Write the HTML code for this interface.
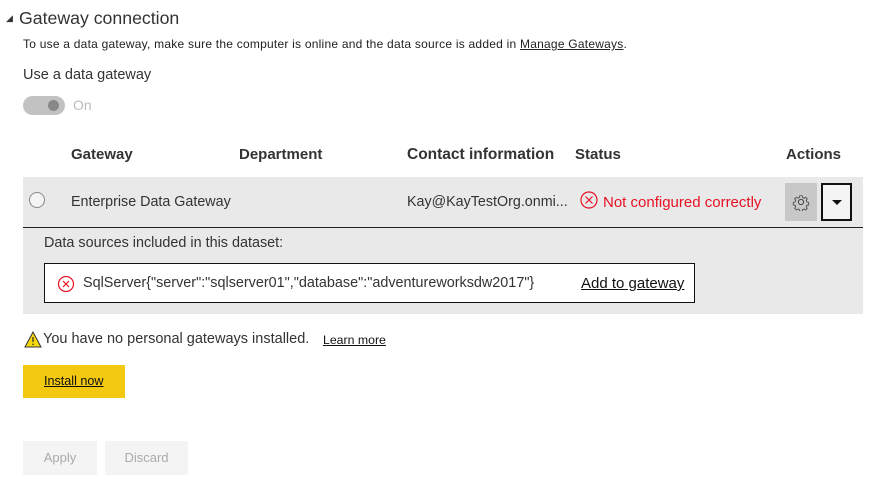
<!DOCTYPE html>
<html><head><style>
*{margin:0;padding:0;box-sizing:border-box}
body{width:894px;height:489px;background:#fff;font-family:"Segoe UI","Liberation Sans",sans-serif;color:#333;position:relative;overflow:hidden}
.a{position:absolute;white-space:nowrap}
u{text-decoration:underline}
</style></head><body>
<div class="a" style="left:6px;top:13px;font-size:9px;color:#333">&#9698;</div>
<div class="a" style="left:19px;top:8px;font-size:17.7px;color:#333">Gateway connection</div>
<div class="a" style="left:23px;top:37px;font-size:12px;letter-spacing:0.23px;color:#222">To use a data gateway, make sure the computer is online and the data source is added in <u>Manage Gateways</u>.</div>
<div class="a" style="left:23px;top:67px;font-size:14.5px;color:#333">Use a data gateway</div>
<div class="a" style="left:23px;top:96px;width:42px;height:19px;border-radius:10px;background:#c2c2c2"></div>
<div class="a" style="left:48px;top:100px;width:11px;height:11px;border-radius:50%;background:#888"></div>
<div class="a" style="left:73px;top:97px;font-size:14px;color:#bbb">On</div>

<div class="a" style="left:71px;top:146px;font-size:15px;font-weight:bold;color:#333">Gateway</div>
<div class="a" style="left:239px;top:146px;font-size:15px;font-weight:bold;color:#333">Department</div>
<div class="a" style="left:407px;top:146px;font-size:15.5px;font-weight:bold;color:#333">Contact information</div>
<div class="a" style="left:575px;top:146px;font-size:15px;font-weight:bold;color:#333">Status</div>
<div class="a" style="left:786px;top:146px;font-size:15px;font-weight:bold;color:#333">Actions</div>

<div class="a" style="left:23px;top:177px;width:840px;height:51px;background:#e9e9e9;border-bottom:1px solid #222"></div>
<div class="a" style="left:29px;top:192px;width:16px;height:16px;border-radius:50%;border:1px solid #888;background:#f4f4f4"></div>
<div class="a" style="left:71px;top:194px;font-size:14.3px;color:#333">Enterprise Data Gateway</div>
<div class="a" style="left:407px;top:194px;font-size:14.3px;color:#333">Kay@KayTestOrg.onmi...</div>
<svg class="a" style="left:580px;top:191px" width="18" height="18" viewBox="0 0 18 18"><circle cx="9" cy="9" r="8" fill="none" stroke="#e81123" stroke-width="1.2"/><path d="M5.5 5.5L12.5 12.5M12.5 5.5L5.5 12.5" stroke="#e81123" stroke-width="1.2"/></svg>
<div class="a" style="left:603px;top:194px;font-size:15px;color:#e81123">Not configured correctly</div>
<div class="a" style="left:785px;top:183px;width:32px;height:38px;background:#c8c8c8"></div>
<svg class="a" style="left:792px;top:193px" width="18" height="18" viewBox="0 0 18 18"><path d="M7.5 1.5h3l.5 2.2 1.6.8 2-1.2 2 2-1.2 2 .7 1.6 2.2.6v3l-2.2.5-.7 1.6 1.2 2-2 2-2-1.2-1.6.7-.5 2.2h-3l-.5-2.2-1.6-.7-2 1.2-2-2 1.2-2-.7-1.6-2.2-.5v-3l2.2-.6.7-1.6-1.2-2 2-2 2 1.2 1.6-.8z" fill="none" stroke="#444" stroke-width="1" transform="translate(1.5 1.5) scale(.83)"/><circle cx="9" cy="9" r="2.6" fill="none" stroke="#444"/></svg>
<div class="a" style="left:821px;top:183px;width:31px;height:38px;background:#f4f4f4;border:2px solid #111"></div>
<div class="a" style="left:832px;top:200px;width:0;height:0;border-left:5px solid transparent;border-right:5px solid transparent;border-top:5px solid #111"></div>

<div class="a" style="left:23px;top:228px;width:840px;height:86px;background:#e9e9e9"></div>
<div class="a" style="left:44px;top:235px;font-size:14.4px;color:#333">Data sources included in this dataset:</div>
<div class="a" style="left:44px;top:263px;width:651px;height:40px;background:#fff;border:1px solid #111"></div>
<svg class="a" style="left:57px;top:275px" width="18" height="18" viewBox="0 0 18 18"><circle cx="9" cy="9" r="7.5" fill="none" stroke="#e81123" stroke-width="1.2"/><path d="M6 6L12 12M12 6L6 12" stroke="#e81123" stroke-width="1.2"/></svg>
<div class="a" style="left:83px;top:275px;font-size:14.4px;color:#333">SqlServer{"server":"sqlserver01","database":"adventureworksdw2017"}</div>
<div class="a" style="left:581px;top:275px;font-size:15px;color:#111"><u>Add to gateway</u></div>

<svg class="a" style="left:24px;top:331px" width="18" height="17" viewBox="0 0 18 17"><path d="M9 1L17 16H1z" fill="#f6d90f" stroke="#333" stroke-width="1"/><path d="M9 6v5" stroke="#333" stroke-width="1.3"/><circle cx="9" cy="13.3" r=".8" fill="#333"/></svg>
<div class="a" style="left:43px;top:331px;font-size:14.5px;color:#333">You have no personal gateways installed.</div>
<div class="a" style="left:323px;top:333px;font-size:12.3px;color:#111"><u>Learn more</u></div>
<div class="a" style="left:23px;top:365px;width:102px;height:33px;background:#f2c811"></div>
<div class="a" style="left:44px;top:374px;font-size:12.6px;color:#111"><u>Install now</u></div>
<div class="a" style="left:23px;top:441px;width:74px;height:34px;background:#f4f4f4;color:#aaa;font-size:13px;text-align:center;line-height:34px">Apply</div>
<div class="a" style="left:105px;top:441px;width:83px;height:34px;background:#f4f4f4;color:#aaa;font-size:13px;text-align:center;line-height:34px">Discard</div>
</body></html>
